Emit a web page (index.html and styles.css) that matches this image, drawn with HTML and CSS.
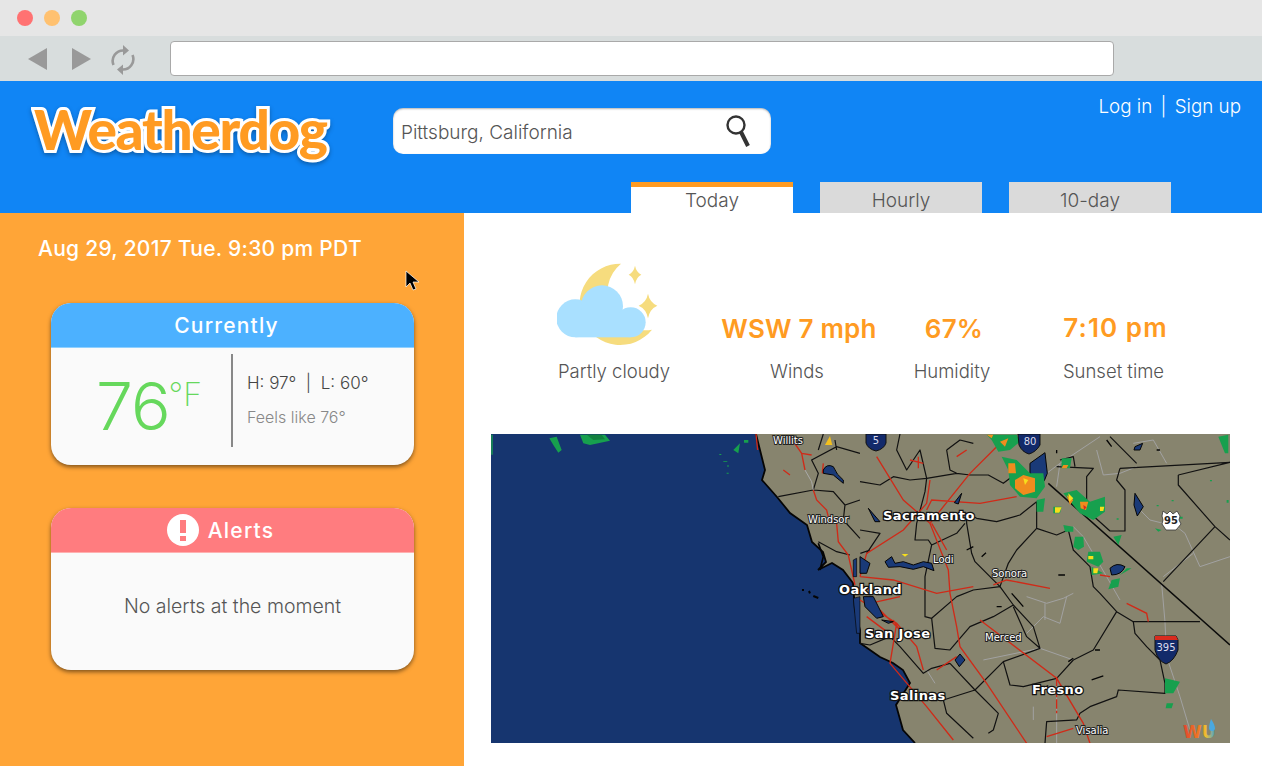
FILE: index.html
```html
<!DOCTYPE html>
<html lang="en">
<head>
<meta charset="utf-8">
<title>Weatherdog</title>
<link rel="stylesheet" href="styles.css">
</head>
<body>
<div class="window">
  <div class="titlebar">
    <span class="dot dot-red"></span><span class="dot dot-yellow"></span><span class="dot dot-green"></span>
  </div>
  <div class="toolbar">
    <svg class="nav-icon" width="19" height="24" viewBox="0 0 19 24"><path d="M0 12 19 1V23Z" fill="#999"/></svg>
    <svg class="nav-icon nav-forward" width="19" height="24" viewBox="0 0 19 24"><path d="M19 12 0 1V23Z" fill="#999"/></svg>
    <svg class="nav-icon nav-reload" width="26" height="32" viewBox="0 0 26 32"><g fill="none" stroke="#999" stroke-width="2.600"><path d="M3.500 21A10.500 10.500 0 0 1 14 6.500"/><path d="M22.500 11A10.500 10.500 0 0 1 12 25.500"/></g><path d="M13 1 19 6.500 13 11.500ZM13 20.500 7 25.500 13 31Z" fill="#999"/></svg>
    <div class="urlbar"></div>
  </div>
  <header class="header">
    <div class="header-top">
      <div class="logo">Weatherdog</div>
      <div class="search">
        <span class="search-text">Pittsburg, California</span>
        <svg width="28" height="34" viewBox="0 0 28 34"><circle cx="11" cy="11" r="8.500" fill="none" stroke="#333" stroke-width="2.400"/><path d="M16 18 23 32" stroke="#333" stroke-width="4"/></svg>
      </div>
      <div class="auth">Log in <span class="auth-sep">|</span> Sign up</div>
    </div>
    <nav class="tabs">
      <a class="tab tab-active">Today</a>
      <a class="tab">Hourly</a>
      <a class="tab">10-day</a>
    </nav>
  </header>
  <main class="main">
    <aside class="sidebar">
      <div class="date">Aug 29, 2017 Tue. 9:30 pm PDT</div>
      <section class="card">
        <div class="card-head head-blue">Currently</div>
        <div class="card-body current">
          <div class="temp"><span class="temp-num">76</span><span class="temp-unit">°F</span></div>
          <div class="divider"></div>
          <div class="range">
            <div class="hilo">H: 97° &nbsp;|&nbsp; L: 60°</div>
            <div class="feels">Feels like 76°</div>
          </div>
        </div>
      </section>
      <section class="card">
        <div class="card-head head-red">
          <svg width="32" height="32" viewBox="0 0 32 32"><circle cx="16" cy="16" r="16" fill="#fff"/><path d="M13 6h6v13h-6zM13 22h6v5h-6z" fill="#ff7c7f"/></svg>
          <span>Alerts</span>
        </div>
        <div class="card-body alert-body">No alerts at the moment</div>
      </section>
    </aside>
    <div class="content">
      <div class="stats">
        <div class="stat">
          <svg class="wx-icon" width="110" height="86" viewBox="80 40 330 258">
            <path d="M272 42A122 122 0 1 0 365 240A113 113 0 0 1 272 42Z" fill="#f6dc7e"/>
            <path d="M314 48Q318 68 333 75Q318 82 314 104Q310 82 295 75Q310 68 314 48Z" fill="#f6dc7e"/>
            <path d="M353 132Q358 158 381 168Q358 178 353 206Q348 178 325 168Q348 158 353 132Z" fill="#f6dc7e"/>
            <g fill="#a9e0ff"><circle cx="135" cy="206" r="57"/><circle cx="215" cy="170" r="63"/><circle cx="301" cy="218" r="45"/><rect x="135" y="190" width="166" height="73"/></g>
          </svg>
          <div class="stat-label">Partly cloudy</div>
        </div>
        <div class="stat"><div class="stat-value">WSW 7 mph</div><div class="stat-label">Winds</div></div>
        <div class="stat"><div class="stat-value">67%</div><div class="stat-label">Humidity</div></div>
        <div class="stat"><div class="stat-value stat-time">7:10 pm</div><div class="stat-label">Sunset time</div></div>
      </div>
      <svg class="map" width="739" height="309" viewBox="491 434 739 309">
        <defs>
          <linearGradient id="wu" x1="0" x2="1" y1="0" y2="0"><stop offset="0" stop-color="#e2442f"/><stop offset=".5" stop-color="#ee7a25"/><stop offset=".7" stop-color="#f0c030"/><stop offset="1" stop-color="#3ea0e0"/></linearGradient>
        </defs>
        <rect x="491" y="434" width="739" height="309" fill="#16356f"/>
        <!-- land -->
        <path d="M756 434 760 450 765 470 762 480 777 497 790 513 807 525 812 542 823 552 826 562 818 570 832 563 843 570 853 583 855 610 860 630 860 643 880 657 893 663 903 670 910 683 896 705 903 730 915 743H1230V434Z" fill="#87846e"/>
        <path d="M756 434 760 450 765 470 762 480 777 497 790 513 807 525 812 542 823 552 826 562 818 570 832 563 843 570 853 583 855 610 860 630 860 643 880 657 893 663 903 670 910 683 896 705 903 730 915 743" fill="none" stroke="#050505" stroke-width="1.800"/>
        <!-- west part -->
        <g transform="translate(490 430) scale(.3333)" fill="none">
          <g stroke="#111" stroke-width="3.600">
            <path d="M865 200 970 180 1030 185 1065 225 1110 210M970 180 985 130 965 90 1040 50 1110 70M1065 225 1060 270 1110 325M985 335 1040 365 1080 375M1035 30 1040 60M1000 12 985 60"/>
          </g>
          <path d="M945 120 965 155 970 180" stroke="#aaa" stroke-width="3"/>
          <path d="M798 12 803 60M907 30 935 70 945 120M935 70 965 75M970 180 980 210 1010 240 1015 260 1040 280 1045 335 1075 375 1085 420 1095 465M1100 505 1105 540M880 120 900 135M1000 100 997 130" stroke="#d02a18" stroke-width="4"/>
          <path d="M1000 120Q1010 100 1030 110 1040 135 1060 150V160L1030 135 1000 130Z" fill="#1a3a78" stroke="#050505" stroke-width="3"/>
          <path d="M1090 390 1100 385V440H1090ZM1090 505 1110 500V610H1100Z" fill="#1a3a78" stroke="#050505" stroke-width="2"/>
          <path d="M936 480 942 480M957 483 960 490M970 498 985 504" stroke="#050505" stroke-width="6"/>
          <path d="M985 340 1000 380 990 420" stroke="#050505" stroke-width="5"/>
          <path d="M178 25 200 20 215 60 205 68 190 45ZM270 14H345L360 32 300 45 280 40Z" fill="#17a04e"/>
          <path d="M290 14H335L345 28 310 30Z" fill="#12803f"/>
          <path d="M750 40 745 70 730 60ZM762 30H775V38H762ZM688 72h6v3h-6zM700 94h12v2h-12zM712 106h4v4h-4zM710 128h6v3h-6zM4 14h4v60H4z" fill="#17a04e"/>
          <path d="M1005 45 1020 18 1027 45Z" fill="#f3c01c"/>
        </g>
        <!-- east part -->
        <g transform="translate(860 430) scale(.3333)" fill="none">
          <!-- grey roads -->
          <g stroke="#a2a2a2" stroke-width="3">
            <path d="M560 130 600 100 720 20M600 100 590 170M710 60 730 135 780 130 830 110M820 40 880 30 920 100M830 230 870 270 950 290 975 310 1020 410 1110 380M905 460 915 575 920 680 960 800 990 900M640 290 670 320 740 440 780 510M500 500 560 520 610 505 640 490M500 610 550 560 600 580 620 500M555 520 555 570M370 690 540 655 640 690M590 740V940M520 870V830M200 720 225 760M910 440 1000 370"/>
          </g>
          <!-- county lines -->
          <g stroke="#111" stroke-width="3.600" stroke-linejoin="round">
            <path d="M120 12 110 60 140 120 180 60 200 145M0 155 60 165 100 140 150 150 200 145 290 130 330 135 385 135 430 160 470 130 500 130M260 60 270 120 290 130M340 40 300 30 260 60"/>
            <path d="M530 215V295L590 315 625 300 640 360 690 410 700 470 720 490 770 545 820 575H1020"/>
            <path d="M530 295 470 360 445 400 420 470 345 395 335 370 320 280V250L350 265 410 275 480 255 530 215"/>
            <path d="M200 145 195 185 170 280 165 330H205L215 345M315 280 290 310 215 345 195 440V560L215 565 290 500 340 480 420 470"/>
            <path d="M420 470 460 525 520 590 540 655 500 620 460 530M215 565 225 655 270 660 330 590 400 560 460 525"/>
            <path d="M540 655 430 695 345 780 270 700M430 695 450 765 490 770 590 745 640 690 700 660 770 545"/>
            <path d="M820 575 825 610 860 650 900 690 915 760V790L775 780 770 800 690 830 660 850 650 870 560 875 555 940"/>
            <path d="M345 780 415 850 400 900 385 910M250 810 345 780M250 810 260 850 340 925M0 640 30 645 90 620 120 650 190 730 215 715 270 700"/>
            <path d="M780 115 1110 97M780 115 770 150 795 180V303H750L680 240V140L700 115 590 110M955 135 1110 97M955 135V165L1065 290 1110 330M1065 290 910 455M0 300 60 310 20 370M1 370 30 360M600 90 640 80 645 110M750 20 830 100"/>
          </g>
          <path d="M565 160 1110 645" stroke="#0a0a0a" stroke-width="4.500"/>
          <!-- red roads -->
          <g stroke="#d02a18" stroke-width="4">
            <path d="M50 80 130 210 210 280 265 420 270 490 290 590 300 650 380 760 500 940M210 150 200 220 130 300 20 370 0 440M210 280 330 130 410 50M200 240 215 210 360 220 470 200M215 280 260 360M150 90 190 100M175 80V115M0 440 100 450 230 490 340 470M0 510 110 580 170 650 190 720M110 580 90 700 200 830 280 930M230 720 290 680M360 570 590 745 670 880 690 940M560 920 640 895M800 520 860 550 865 575M400 465 440 450 570 475M720 435 750 440M290 80 320 60M0 470 60 490M30 520 120 500M60 540 120 600M20 560 100 620M100 570 130 620"/>
          </g>
          <path d="M590 740V850" stroke="#d02a18" stroke-width="4" stroke-dasharray="28 6"/>
          <!-- lakes / delta -->
          <g fill="#1a3a78" stroke="#050505" stroke-width="3">
            <path d="M510 100 555 68 562 130 553 152 510 130Z"/>
            <path d="M825 190 850 230 832 258 822 225Z"/>
            <path d="M750 415Q770 395 795 410 785 435 755 435Z"/>
            <path d="M25 235 60 275H45ZM283 218 305 190 295 222ZM825 50 848 40 840 60H822ZM285 690 300 672 315 690 298 710Z"/>
            <path d="M0 380 30 400 20 430H0ZM10 500 40 500 70 560 50 565 15 530Z"/>
            <path d="M65 570 100 575 85 580Z"/>
            <path d="M75 395 95 380 105 400 130 395 160 405 190 395 215 400 222 422 190 410 160 418 120 410 85 412Z"/>
          </g>
          <path d="M320 360 340 350M365 380 378 368M595 435H615M410 530H425M455 490 490 530M625 695 640 685M695 750 730 738M720 660H705M590 60V70M890 60H900M740 30 755 50" stroke="#050505" stroke-width="4"/>
          <!-- radar -->
          <g fill="#17a04e">
            <path d="M380 14H470L480 35 450 60 415 65 395 30ZM425 80 470 90 510 130 550 130 555 170 530 205 480 200 450 165 445 120ZM605 85H635L630 115H605ZM610 190 650 180 690 215 735 200 735 245 700 270 660 250ZM530 210 555 205 550 245H530ZM580 230H605L600 250H580ZM610 285 640 290 640 305 615 305ZM645 320H670L672 350 655 360 640 350ZM685 365H720L730 395 715 410 680 395ZM695 410 730 430 695 435ZM755 450 780 445 775 470 745 478ZM760 320 785 315 775 345ZM915 745 960 755 940 790 915 790ZM920 820H940L935 835H917Z"/>
            <path d="M1075 20 1105 14V70H1095ZM885 295 905 300 895 305ZM770 265h6v4h-6zM935 210h6v4h-6zM960 260h8v6h-8zM890 225h6v4h-6zM1050 150h6v4h-6zM1100 210h6v8h-6zM800 415 815 415 780 435Z"/>
          </g>
          <g fill="#f08c1e">
            <path d="M465 150 490 135 525 145 525 185 490 195 465 175ZM445 100H465L468 130H445ZM380 14H400L395 25ZM420 35 445 25 435 50ZM620 195 640 210 630 225ZM660 215H685L678 240 662 235ZM610 105H625L620 115H605Z" />
          </g>
          <g fill="#f6de1c">
            <path d="M490 145 505 150 495 165ZM585 232H605L598 248H585ZM625 190 640 205 628 215ZM685 378H700L700 388H685ZM700 415H715L712 430H700ZM720 230H733L730 243H720ZM125 372H145L135 380Z"/>
          </g>
          <path d="M670 225 680 232 672 240Z" fill="#d92b1e"/>
        </g>
        <!-- shields -->
        <g class="shield-i">
          <path d="M866 434H886V443Q884 449 876 451 868 449 866 443Z" fill="#132a6a" stroke="#111"/>
          <text x="876" y="444" class="shield-text">5</text>
          <path d="M1018 434H1040V445Q1036 452 1029 454 1022 452 1019 445Z" fill="#132a6a" stroke="#111"/>
          <text x="1030" y="445" class="shield-text">80</text>
          <path d="M1155 636H1176L1178 640V650Q1174 661 1166 664 1158 661 1155 650V640Z" fill="#132a6a" stroke="#111"/>
          <path d="M1155 636H1176L1178 640H1155Z" fill="#d92b1e"/>
          <text x="1166" y="651" class="shield-text">395</text>
          <path d="M1163 511 1167 514 1170 511 1173 514 1177 511 1180 516 1179 520 1181 524 1176 530H1166L1162 524 1163 520 1162 516Z" fill="#fff" stroke="#333" stroke-width=".8"/>
          <text x="1171" y="524" class="shield-text shield-dark">95</text>
        </g>
        <!-- labels -->
        <g>
          <text x="773" y="444" class="city-sm">Willits</text>
          <text x="808" y="523" class="city-sm">Windsor</text>
          <text x="933" y="563" class="city-sm">Lodi</text>
          <text x="992" y="577" class="city-sm">Sonora</text>
          <text x="985" y="641" class="city-sm">Merced</text>
          <text x="1076" y="734" class="city-sm">Visalia</text>
          <text x="883" y="520" class="city">Sacramento</text>
          <text x="839" y="594" class="city">Oakland</text>
          <text x="865" y="638" class="city">San Jose</text>
          <text x="890" y="700" class="city">Salinas</text>
          <text x="1032" y="694" class="city">Fresno</text>
        </g>
        <text x="1183" y="738" class="wu-logo" fill="url(#wu)">WU</text>
        <path d="M1211 719Q1215 725 1215 728A3 3 0 0 1 1209 728Q1209 725 1211 719Z" fill="#4aa8e0"/>
      </svg>
    </div>
  </main>
  <svg class="cursor" width="16" height="22" viewBox="0 0 16 22"><path d="M1 1V17L5 13 8 20 11 19 8 12H14Z" fill="#000" stroke="#fff" stroke-width=".7"/></svg>
</div>
</body>
</html>
```
FILE: styles.css
```css
* { box-sizing: border-box; }
html, body { margin: 0; padding: 0; }
body { font-family: Inter, "Liberation Sans", sans-serif; font-weight: 300; color: #444; }
.window { position: relative; width: 1262px; height: 766px; overflow: hidden; display: flex; flex-direction: column; }

.titlebar { height: 36px; background: #e6e6e6; display: flex; align-items: center; gap: 11px; padding-left: 17px; }
.dot { width: 16px; height: 16px; border-radius: 50%; }
.dot-red { background: #ff7272; }
.dot-yellow { background: #ffc170; }
.dot-green { background: #90d46d; }

.toolbar { height: 45px; background: #d8dddd; display: flex; align-items: center; padding-left: 28px; }
.nav-icon { flex: none; }
.nav-forward { margin-left: 25px; }
.nav-reload { margin-left: 19px; margin-top: 2px; }
.urlbar { margin-left: 34px; width: 944px; height: 35px; background: #fff; border: 1px solid #a9a9a9; border-radius: 4px; }

.header { height: 132px; background: #1085f5; display: flex; flex-direction: column; }
.header-top { height: 101px; display: flex; align-items: flex-start; position: relative; padding-left: 34px; }
.logo { width: 359px; margin-top: 17px; font-family: Lato, sans-serif; font-weight: 900; font-size: 55px; line-height: 62px; letter-spacing: -1.300px; color: #ff9b22; -webkit-text-stroke: 6px #fff; paint-order: stroke fill; filter: drop-shadow(0 2px 2px rgba(0,0,0,.3)); }
.search { margin-top: 27px; width: 378px; height: 46px; background: #fff; border-radius: 10px; box-shadow: inset 0 1px 2px rgba(0,0,0,.3); display: flex; align-items: center; justify-content: space-between; padding: 0 18px 0 8px; }
.search-text { font-size: 19px; line-height: 24px; margin-top: 4px; color: #555; }
.auth { margin-left: auto; margin-right: 21px; margin-top: 14px; font-size: 18.800px; color: #fff; }
.auth-sep { margin: 0 3px; }

.tabs { height: 31px; margin-left: 631px; display: flex; gap: 27px; }
.tab { width: 162px; background: #dadada; font-size: 19px; color: #555; display: flex; align-items: flex-end; justify-content: center; padding-bottom: 1px; }
.tab-active { background: #fff; border-top: 5px solid #ff9b22; }

.main { flex: 1; display: flex; }
.sidebar { width: 464px; background: #ffa537; padding: 22px 0 0 51px; }
.date { margin-left: -13px; font-size: 21px; line-height: 28px; font-weight: 500; color: #fff; letter-spacing: .27px; white-space: nowrap; }
.card { width: 363px; height: 162px; margin-top: 40px; border-radius: 20px; overflow: hidden; background: #fafafa; box-shadow: 0 2px 4px rgba(0,0,0,.5); display: flex; flex-direction: column; }
.card + .card { margin-top: 43px; }
.card-head { height: 45px; flex: none; color: #fff; font-size: 21px; font-weight: 500; letter-spacing: 1.200px; display: flex; align-items: center; justify-content: center; gap: 9px; }
.head-blue { background: #4cb1ff; border-bottom: 1px solid #8fd0ff; padding-right: 12px; }
.head-red { background: #ff7c7f; border-bottom: 1px solid #ffb0b0; padding-right: 24px; }
.card-body { flex: 1; }
.current { display: flex; align-items: flex-start; }
.temp { width: 180px; padding-left: 45px; display: flex; color: #66d85c; font-weight: 300; }
.temp-num { font-size: 66px; line-height: 116px; letter-spacing: -1px; }
.temp-unit { font-size: 32px; line-height: 94px; font-weight: 200; margin-left: -1px; }
.divider { width: 2px; height: 93px; margin-top: 6px; background: #888; }
.range { padding: 23px 0 0 14px; }
.hilo { font-size: 17px; line-height: 24px; color: #444; }
.feels { margin-top: 12px; font-size: 16px; line-height: 20px; color: #888; }
.alert-body { display: flex; align-items: flex-start; justify-content: center; padding-top: 41px; font-size: 19.500px; line-height: 24px; color: #555; }

.content { flex: 1; background: #fff; padding: 50px 0 0 27px; }
.stats { margin-left: 41px; display: grid; grid-template-columns: 164px 202px 108px 215px; height: 123px; align-items: end; padding-bottom: 3px; margin-bottom: 48px; }
.stat { display: flex; flex-direction: column; align-items: center; white-space: nowrap; }
.wx-icon { margin-bottom: 10px; margin-right: 4px; }
.stat-value { font-size: 26px; line-height: 30px; font-weight: 600; color: #ff9b22; margin-bottom: 15px; letter-spacing: .2px; padding-left: 4px; }
.stat-time { letter-spacing: 1.100px; margin-bottom: 16px; }
.stat-label { font-size: 18.500px; line-height: 24px; color: #555; }

.map { display: block; }
.city { font-family: "DejaVu Sans", sans-serif; font-weight: 700; font-size: 13px; letter-spacing: .4px; fill: #fff; stroke: #111; stroke-width: 2.500px; paint-order: stroke fill; }
.city-sm { font-family: "DejaVu Sans", sans-serif; font-weight: 400; font-size: 10px; fill: #fff; stroke: #222; stroke-width: 2px; paint-order: stroke fill; }
.shield-text { font-family: "DejaVu Sans", sans-serif; font-weight: 400; font-size: 10px; fill: #dde; text-anchor: middle; }
.shield-dark { fill: #222; font-weight: 700; }
.wu-logo { font-family: "DejaVu Sans", sans-serif; font-weight: 700; font-size: 17px; }

.cursor { position: absolute; left: 405px; top: 270px; }
```
